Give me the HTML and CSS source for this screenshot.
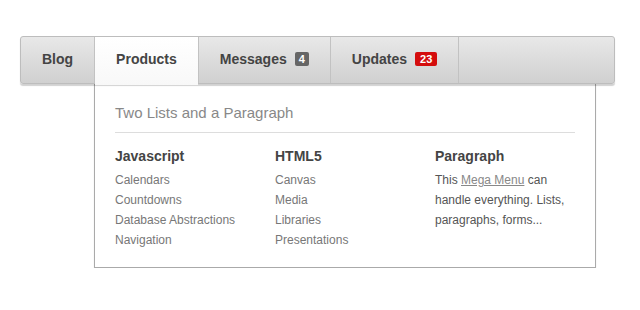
FILE: index.html
```html
<!DOCTYPE html>
<html lang="en">
<head>
    <meta charset="UTF-8">
    <meta name="viewport" content="width=device-width, initial-scale=1.0">
    <title>Mega Menu</title>
    <link rel="stylesheet" href="styles.css">
</head>
<body>
    <nav class="menu">
        <ul class="tabs">
            <li class="tab"><a href="#">Blog</a></li>
            <li class="tab active"><a href="#">Products</a></li>
            <li class="tab"><a href="#">Messages <span class="badge">4</span></a></li>
            <li class="tab"><a href="#">Updates <span class="badge red">23</span></a></li>
        </ul>
    </nav>
    <div class="dropdown">
        <h2>Two Lists and a Paragraph</h2>
        <div class="columns">
            <div class="col">
                <h3>Javascript</h3>
                <ul class="links">
                    <li><a href="#">Calendars</a></li>
                    <li><a href="#">Countdowns</a></li>
                    <li><a href="#">Database Abstractions</a></li>
                    <li><a href="#">Navigation</a></li>
                </ul>
            </div>
            <div class="col">
                <h3>HTML5</h3>
                <ul class="links">
                    <li><a href="#">Canvas</a></li>
                    <li><a href="#">Media</a></li>
                    <li><a href="#">Libraries</a></li>
                    <li><a href="#">Presentations</a></li>
                </ul>
            </div>
            <div class="col">
                <h3>Paragraph</h3>
                <p>This <a href="#">Mega Menu</a> can handle everything. Lists, paragraphs, forms...</p>
            </div>
        </div>
    </div>
</body>
</html>
```

FILE: styles.css
```css
body {
    font-family: "Liberation Sans", Arial, sans-serif;
    margin: 0;
    padding: 36px 0 0 20px;
    background-color: #fff;
}

.menu {
    position: relative;
    z-index: 2;
    width: 593px;
    height: 46px;
    border: 1px solid #bdbdbd;
    border-radius: 3px;
    background: linear-gradient(#e8e8e8, #d0d0d0);
    box-shadow: 0 2px 1px rgba(0, 0, 0, 0.18);
}

.tabs {
    list-style-type: none;
    margin: 0;
    padding: 0;
    display: flex;
    height: 46px;
}

.tab {
    border-right: 1px solid #c2c2c2;
}

.tab a {
    box-sizing: border-box;
    display: flex;
    align-items: center;
    height: 46px;
    padding: 0 21px 2px 21px;
    text-decoration: none;
    color: #444;
    font-size: 14px;
    font-weight: bold;
}

.tab.active a {
    height: 48px;
    padding-bottom: 4px;
    background: linear-gradient(#fff, #f8f8f8);
}

.badge {
    display: inline-block;
    margin-left: 8px;
    padding: 1px 4px;
    border-radius: 2px;
    background-color: #666;
    color: #fff;
    font-size: 11px;
    line-height: 12px;
}

.badge.red {
    padding: 1px 5px;
    background-color: #d40d0d;
}

.dropdown {
    position: relative;
    z-index: 1;
    width: 460px;
    height: 163px;
    margin: -1px 0 0 74px;
    padding: 20px 20px 0 20px;
    background-color: #fff;
    border: 1px solid #aaa;
    box-shadow: 0 2px 1px rgba(0, 0, 0, 0.12);
}

.dropdown h2 {
    margin: 0;
    padding-bottom: 11px;
    border-bottom: 1px solid #ddd;
    font-size: 15px;
    font-weight: normal;
    color: #888;
}

.columns {
    display: grid;
    grid-template-columns: 160px 160px 1fr;
    padding-top: 15px;
}

.col h3 {
    margin: 0 0 6px 0;
    font-size: 14px;
    color: #444;
}

.links {
    list-style-type: none;
    margin: 0;
    padding: 0;
}

.links li {
    line-height: 20px;
    font-size: 12px;
}

.links a {
    color: #777;
    text-decoration: none;
}

.col p {
    margin: 0;
    width: 130px;
    font-size: 12px;
    line-height: 20px;
    color: #555;
}

.col p a {
    color: #888;
}
```
